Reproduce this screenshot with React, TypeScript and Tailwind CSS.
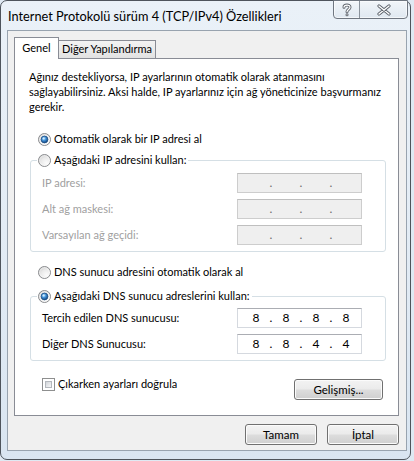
type RadioProps = { checked?: boolean }

const Radio = ({ checked }: RadioProps) => (
  <svg width="13" height="13" viewBox="0 0 13 13" className="shrink-0">
    <defs>
      <radialGradient id="rbg" cx="65%" cy="70%" r="75%">
        <stop offset="0%" stopColor="#fbfbfb" />
        <stop offset="60%" stopColor="#e9e9e9" />
        <stop offset="100%" stopColor="#c9c9c9" />
      </radialGradient>
      <radialGradient id="rdot" cx="40%" cy="35%" r="70%">
        <stop offset="0%" stopColor="#b9e3ff" />
        <stop offset="45%" stopColor="#3f8fd6" />
        <stop offset="100%" stopColor="#0f3b70" />
      </radialGradient>
    </defs>
    <circle cx="6.5" cy="6.5" r="6" fill="url(#rbg)" stroke="#8a8c8f" strokeWidth="1" />
    <circle cx="6.5" cy="6.5" r="4.8" fill="none" stroke="#ffffff" strokeOpacity="0.7" strokeWidth="0.8" />
    {checked && (
      <>
        <circle cx="6.5" cy="6.5" r="3.4" fill="url(#rdot)" stroke="#1d4f86" strokeWidth="0.8" />
        <circle cx="5.6" cy="5.5" r="1" fill="#dff3ff" fillOpacity="0.8" />
      </>
    )}
  </svg>
)

const Checkbox = () => (
  <div className="w-[13px] h-[13px] shrink-0 border border-[#8e8f8f] bg-white p-[2px]">
    <div className="w-full h-full border border-[#b4b8bd] bg-gradient-to-br from-[#d0d4d9] to-[#f7f7f7]" />
  </div>
)

type IpBoxProps = { values?: string[]; disabled?: boolean }

const IpBox = ({ values, disabled }: IpBoxProps) => {
  const octets = values ?? ['', '', '', '']
  return (
    <div
      className={
        disabled
          ? 'w-[125px] h-[20px] flex items-center pl-[5px] border border-[#cdcdcd] border-t-[#bfbfbf] bg-[#efefef] text-[#6d6d6d]'
          : 'w-[125px] h-[20px] flex items-center pl-[5px] border border-[#d5d9df] border-t-[#abadb3] bg-white text-black'
      }
    >
      {octets.map((v, i) => (
        <div key={i} className="flex items-center">
          <span className="w-[26px] text-center text-[12px] leading-[18px]">{v}</span>
          {i < 3 && <span className="w-[4px] text-center text-[12px] leading-[18px]">.</span>}
        </div>
      ))}
    </div>
  )
}

const Button = ({ label, w }: { label: string; w: string }) => (
  <button
    className={`${w} h-[21px] rounded-[3px] border border-[#707070] bg-[linear-gradient(#f3f3f3,#ebebeb_48%,#dddddd_52%,#cfcfcf)] shadow-[inset_0_0_0_1px_#fbfbfb] text-[11.5px] leading-[18px] text-black`}
  >
    {label}
  </button>
)

const FieldRow = ({ label, disabled, values }: { label: string; disabled?: boolean; values?: string[] }) => (
  <div className="flex h-[20px] items-center justify-between">
    <span className={disabled ? 'text-[#a0a0a0]' : 'text-black'}>{label}</span>
    <IpBox disabled={disabled} values={values} />
  </div>
)

const TitleButtons = () => (
  <div className="flex -mt-px mr-[2px] h-[19px] rounded-b-[4px] border border-[#6f7680] overflow-hidden bg-gradient-to-b from-[#f4f7fa]/80 to-[#dde6ef]/80 shadow-[inset_0_0_0_1px_rgba(255,255,255,0.6)]">
    <div className="w-[26px] h-full flex items-center justify-center border-r border-[#8a929b]">
      <svg width="12" height="14" viewBox="0 0 12 14">
        <g fill="none" strokeLinecap="round" strokeLinejoin="round">
          <path d="M3 4.2C3 1.4 9 1.2 9 4.3C9 6.6 6 6.5 6 8.8" stroke="#5d636b" strokeWidth="3" />
          <path d="M6 11.8h0.01" stroke="#5d636b" strokeWidth="3" />
          <path d="M3 4.2C3 1.4 9 1.2 9 4.3C9 6.6 6 6.5 6 8.8" stroke="#ffffff" strokeWidth="1.2" />
          <path d="M6 11.8h0.01" stroke="#ffffff" strokeWidth="1.2" />
        </g>
      </svg>
    </div>
    <div className="w-[47px] h-full flex items-center justify-center">
      <svg width="16" height="12" viewBox="0 0 16 12">
        <g fill="none" strokeLinecap="round">
          <path d="M3 2L13 10M13 2L3 10" stroke="#5d636b" strokeWidth="3.2" />
          <path d="M3 2L13 10M13 2L3 10" stroke="#ffffff" strokeWidth="1.4" />
        </g>
      </svg>
    </div>
  </div>
)

export default function App() {
  return (
    <div className="w-[414px] h-[461px] overflow-hidden bg-[#dfe9f3] font-['Lato',sans-serif] text-[11px] text-[#1e1e1e]">
      <div className="w-[411px] h-[460px] rounded-[7px] border border-[#4e545c] bg-gradient-to-b from-[#eaf1f8] via-[#e3ecf5] to-[#d9e5f1] flex flex-col">
        {/* title bar */}
        <div className="flex h-[29px] items-start justify-between">
          <div className="pl-[7px] pt-[6px] text-[12.75px] leading-[18px] text-black whitespace-nowrap">
            Internet Protokolü sürüm 4 (TCP/IPv4) Özellikleri
          </div>
          <TitleButtons />
        </div>

        {/* client area */}
        <div className="ml-[6px] w-[400px] h-[421px] border border-[#98a3af] bg-[#f0f0f0] flex flex-col">
          <div className="flex items-end pt-[6px] pl-[6px] h-[27px]">
            <div className="relative z-10 -mb-px w-[45px] h-[22px] border border-b-0 border-[#898c95] bg-white flex items-center justify-center text-black">
              Genel
            </div>
            <div className="w-[97px] h-[18px] border border-l-0 border-b-0 border-[#898c95] bg-gradient-to-b from-[#f3f3f3] to-[#e2e2e2] flex items-center justify-center text-black">
              Diğer Yapılandırma
            </div>
          </div>

          <div className="ml-[6px] w-[385px] h-[358px] border border-[#898c95] bg-white flex flex-col">
            <p className="pl-[14px] pt-[10px] leading-[15px] text-black whitespace-nowrap">
              Ağınız destekliyorsa, IP ayarlarının otomatik olarak atanmasını
              <br />
              sağlayabilirsiniz. Aksi halde, IP ayarlarınız için ağ yöneticinize başvurmanız
              <br />
              gerekir.
            </p>

            <div className="mt-[17px] pl-[23px] h-[16px] flex items-center gap-[3px] text-black">
              <Radio checked />
              <span>Otomatik olarak bir IP adresi al</span>
            </div>

            <fieldset className="mt-[5px] ml-[15px] w-[356px] rounded-[3px] border border-[#d5dfe5]">
              <legend className="ml-[6px] pl-[1px] pr-[2px] h-[16px] flex items-center gap-[3px] text-black">
                <Radio />
                <span>Aşağıdaki IP adresini kullan:</span>
              </legend>
              <div className="pt-[5px] pb-[6px] pl-[11px] pr-[23px] flex flex-col gap-[6px]">
                <FieldRow label="IP adresi:" disabled />
                <FieldRow label="Alt ağ maskesi:" disabled />
                <FieldRow label="Varsayılan ağ geçidi:" disabled />
              </div>
            </fieldset>

            <div className="mt-[12px] pl-[23px] h-[16px] flex items-center gap-[3px] text-black">
              <Radio />
              <span>DNS sunucu adresini otomatik olarak al</span>
            </div>

            <fieldset className="mt-[8px] ml-[15px] w-[356px] rounded-[3px] border border-[#d5dfe5]">
              <legend className="ml-[6px] pl-[1px] pr-[2px] h-[16px] flex items-center gap-[3px] text-black">
                <Radio checked />
                <span>Aşağıdaki DNS sunucu adreslerini kullan:</span>
              </legend>
              <div className="pt-[4px] pb-[6px] pl-[11px] pr-[23px] flex flex-col gap-[6px]">
                <FieldRow label="Tercih edilen DNS sunucusu:" values={['8', '8', '8', '8']} />
                <FieldRow label="Diğer DNS Sunucusu:" values={['8', '8', '4', '4']} />
              </div>
            </fieldset>

            <div className="mt-[15px] pl-[27px] pr-[15px] flex items-start justify-between">
              <div className="h-[16px] flex items-center gap-[3px] text-black">
                <Checkbox />
                <span>Çıkarken ayarları doğrula</span>
              </div>
              <div className="mt-[3px]">
                <Button label="Gelişmiş..." w="w-[89px]" />
              </div>
            </div>
          </div>

          <div className="mt-[8px] pr-[7px] flex justify-end gap-[10px]">
            <Button label="Tamam" w="w-[72px]" />
            <Button label="İptal" w="w-[72px]" />
          </div>
        </div>
      </div>
    </div>
  )
}
